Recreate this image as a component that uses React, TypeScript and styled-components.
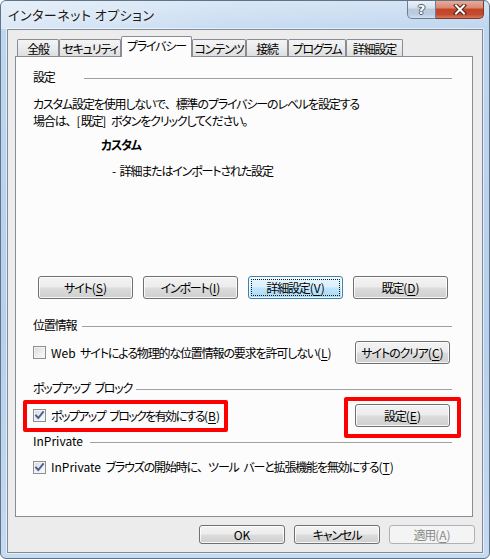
import React from 'react';
import styled, { createGlobalStyle, css } from 'styled-components';

const GlobalStyle = createGlobalStyle`
  html, body { margin: 0; padding: 0; background: #ffffff; }
  body {
    font-family: "Noto Sans CJK JP", "Noto Sans", sans-serif;
    font-size: 12px;
    letter-spacing: -1.15px;
    word-spacing: 3px;
    font-feature-settings: "palt" 1;
    color: #000;
  }
  * { box-sizing: border-box; }
  u { text-underline-offset: 2px; }
`;

const Latin = styled.span`
  letter-spacing: 0;
`;

const FullWidth = styled.span`
  font-feature-settings: normal;
  letter-spacing: -1px;
`;

const Key = ({ k }: { k: string }) => (
  <Latin>
    (<u>{k}</u>)
  </Latin>
);

const Window = styled.div`
  width: 490px;
  height: 559px;
  display: flex;
  flex-direction: column;
  border: 1px solid #5f7389;
  border-radius: 6px;
  overflow: hidden;
  background: linear-gradient(180deg, #d3e3f4 0px, #bfd6ee 28px, #b7d0eb 60%, #c6daf0 100%);
`;

const TitleBar = styled.div`
  height: 28px;
  display: flex;
  align-items: flex-start;
  padding-left: 7px;
  background: linear-gradient(90deg, rgba(255, 255, 255, 0.45) 0%, rgba(255, 255, 255, 0.15) 45%, rgba(255, 255, 255, 0) 100%);
`;

const Title = styled.div`
  flex: 1;
  padding-top: 6px;
  line-height: 16px;
  font-size: 13px;
  letter-spacing: 0.5px;
  word-spacing: 0;
  color: #1a1a1a;
  text-shadow: 0 0 6px rgba(255, 255, 255, 0.9);
`;

const CaptionButtons = styled.div`
  display: flex;
  margin-top: -1px;
  margin-right: 5px;
  height: 19px;
`;

const CaptionButton = styled.div<{ $close?: boolean }>`
  height: 19px;
  width: ${(p) => (p.$close ? 48 : 29)}px;
  display: flex;
  align-items: center;
  justify-content: center;
  border: 1px solid #6b7e95;
  border-top: none;
  ${(p) =>
    p.$close
      ? css`
          border-left: none;
          border-radius: 0 0 5px 0;
          border-color: #7a3a2c;
          background: linear-gradient(180deg, #eab0a2 0%, #d98670 45%, #c44228 50%, #c24b2f 80%, #d8785a 100%);
        `
      : css`
          border-radius: 0 0 0 5px;
          background: linear-gradient(180deg, #eef3f9 0%, #d6e1ee 45%, #b8c9dc 50%, #bccde0 80%, #d2dfee 100%);
        `}
`;

const HelpGlyph = styled.span`
  font-family: "DejaVu Sans", sans-serif;
  font-weight: bold;
  font-size: 13px;
  line-height: 13px;
  letter-spacing: 0;
  color: #ffffff;
  text-shadow: -1px 0 #4d5c6e, 1px 0 #4d5c6e, 0 -1px #4d5c6e, 0 1px #4d5c6e;
`;

const Client = styled.div`
  flex: 1;
  margin: 0 6px 5px 6px;
  border: 1px solid #7f8c9c;
  box-shadow: 0 0 0 1px rgba(255, 255, 255, 0.55);
  background: #ececec;
  display: flex;
  flex-direction: column;
  padding: 6px 7px 8px 7px;
`;

const TabStrip = styled.div`
  height: 21px;
  margin-bottom: -1px;
  padding-left: 2px;
  display: flex;
  align-items: flex-end;
  position: relative;
  z-index: 1;
`;

const Tab = styled.div<{ $w: number; $selected?: boolean }>`
  width: ${(p) => p.$w}px;
  display: flex;
  align-items: center;
  justify-content: center;
  white-space: nowrap;
  border: 1px solid #898c95;
  border-bottom: none;
  border-radius: 2px 2px 0 0;
  ${(p) =>
    p.$selected
      ? css`
          height: 21px;
          background: #fcfcfc;
          padding-bottom: 3px;
        `
      : css`
          height: 17px;
          margin-bottom: 1px;
          background: linear-gradient(180deg, #f4f4f4 0%, #ebebeb 50%, #dedede 100%);
          padding-top: 1px;
        `}
`;

const Panel = styled.div`
  flex: 1;
  margin-right: 2px;
  border: 1px solid #898c95;
  background: #fcfcfc;
  padding: 12px 20px 0 17px;
  display: flex;
  flex-direction: column;
`;

const GroupHeader = styled.div<{ $gap?: number; $mt?: number }>`
  display: flex;
  align-items: center;
  height: 16px;
  line-height: 16px;
  white-space: nowrap;
  margin-top: ${(p) => p.$mt ?? 0}px;
  &::after {
    content: '';
    flex: 1;
    height: 1px;
    background: #a0a0a0;
    margin-left: ${(p) => p.$gap ?? 6}px;
    margin-top: 2px;
  }
`;

const Description = styled.p`
  margin: 10px 0 0 0;
  line-height: 17px;
`;

const LevelName = styled.div`
  margin: 8px 0 0 68px;
  line-height: 16px;
  font-weight: bold;
`;

const LevelDetail = styled.div`
  margin: 10px 0 0 79px;
  line-height: 16px;
`;

const ButtonRow = styled.div`
  display: flex;
  gap: 10px;
  margin-top: 97px;
  padding-left: 5px;
`;

const OptionRow = styled.div<{ $mt: number }>`
  display: flex;
  align-items: center;
  justify-content: space-between;
  margin-top: ${(p) => p.$mt}px;
  padding-right: 2px;
`;

const Button = styled.button<{ $w?: number; $h?: number; $default?: boolean }>`
  position: relative;
  display: block;
  flex: none;
  width: ${(p) => p.$w ?? 95}px;
  height: ${(p) => p.$h ?? 23}px;
  padding: 0;
  margin: 0;
  text-align: center;
  white-space: nowrap;
  font-family: inherit;
  font-size: 12px;
  letter-spacing: inherit;
  word-spacing: inherit;
  font-feature-settings: "palt" 1;
  line-height: ${(p) => (p.$h ?? 23) - 3}px;
  color: #000;
  border: 1px solid #707070;
  border-radius: 3px;
  background: linear-gradient(180deg, #f3f3f3 0%, #ececec 48%, #dcdcdc 52%, #cfcfcf 100%);
  box-shadow: inset 0 0 0 1px rgba(255, 255, 255, 0.8);
  ${(p) =>
    p.$default &&
    css`
      border-color: #3c7fb1;
      background: linear-gradient(180deg, #eaf6fd 0%, #d9f0fc 48%, #bee6fd 52%, #a7d9f5 100%);
      &::after {
        content: '';
        position: absolute;
        inset: 2px;
        border: 1px dotted #1a1a1a;
        border-radius: 1px;
      }
    `}
  &:disabled {
    color: #8a8a8a;
    border-color: #adb2b5;
    background: #f4f4f4;
    box-shadow: none;
  }
`;

const CheckLabel = styled.label`
  position: relative;
  display: flex;
  align-items: center;
  gap: 5px;
  height: 16px;
  line-height: 16px;
  white-space: nowrap;
`;

const CheckText = styled.span<{ $tight?: boolean }>`
  display: block;
  letter-spacing: ${(p) => (p.$tight ? '-1.6px' : 'inherit')};
`;

const CheckBox = styled.span`
  width: 13px;
  height: 13px;
  flex: none;
  display: flex;
  align-items: center;
  justify-content: center;
  border: 1px solid #8e8f8f;
  background: linear-gradient(135deg, #d8d8d8 0%, #eeeeee 55%, #fafafa 100%);
  box-shadow: inset 0 0 0 1px #f4f4f4;
`;

const Highlight = styled.span`
  position: absolute;
  border: 4px solid #ff0000;
  border-radius: 2px;
  pointer-events: none;
  z-index: 2;
`;

const LabelHighlight = styled(Highlight)`
  top: -8px;
  left: -10px;
  width: 205px;
  height: 32px;
`;

const ButtonHighlight = styled(Highlight)`
  top: -7px;
  bottom: -11px;
  left: -11px;
  right: -11px;
`;

const ButtonWrap = styled.div`
  position: relative;
`;

const Footer = styled.div`
  display: flex;
  justify-content: flex-end;
  gap: 9px;
  margin-top: 8px;
`;

const Check = ({ checked }: { checked?: boolean }) => (
  <CheckBox>
    {checked && (
      <svg width="11" height="11" viewBox="0 0 11 11">
        <path d="M2 5.5 L4.3 8 L9 2.2" fill="none" stroke="#4a5f97" strokeWidth="1.9" strokeLinecap="square" />
      </svg>
    )}
  </CheckBox>
);

const tabs: { label: string; w: number; selected?: boolean }[] = [
  { label: '全般', w: 42 },
  { label: 'セキュリティ', w: 62 },
  { label: 'プライバシー', w: 71, selected: true },
  { label: 'コンテンツ', w: 54 },
  { label: '接続', w: 42 },
  { label: 'プログラム', w: 58 },
  { label: '詳細設定', w: 57 },
];

export default function App() {
  return (
    <>
      <GlobalStyle />
      <Window>
        <TitleBar>
          <Title>インターネット オプション</Title>
          <CaptionButtons>
            <CaptionButton>
              <HelpGlyph>?</HelpGlyph>
            </CaptionButton>
            <CaptionButton $close>
              <svg width="14" height="11" viewBox="0 0 14 11">
                <path d="M3 1.5 L11 9.5 M11 1.5 L3 9.5" stroke="#4a2218" strokeWidth="4" strokeLinecap="square" />
                <path d="M3 1.5 L11 9.5 M11 1.5 L3 9.5" stroke="#ffffff" strokeWidth="2" strokeLinecap="square" />
              </svg>
            </CaptionButton>
          </CaptionButtons>
        </TitleBar>
        <Client>
          <TabStrip>
            {tabs.map((t) => (
              <Tab key={t.label} $w={t.w} $selected={t.selected}>
                {t.label}
              </Tab>
            ))}
          </TabStrip>
          <Panel>
            <GroupHeader $gap={29}>設定</GroupHeader>
            <Description>
              カスタム設定を使用しないで<FullWidth>、</FullWidth>標準のプライバシーのレベルを設定する
              <br />
              場合は<FullWidth>、</FullWidth>
              <Latin>[</Latin>既定<Latin>]</Latin> ボタンをクリックしてください。
            </Description>
            <LevelName>カスタム</LevelName>
            <LevelDetail>- 詳細またはインポートされた設定</LevelDetail>
            <ButtonRow>
              <Button>
                サイト<Key k="S" />
              </Button>
              <Button>
                インポート<Key k="I" />
              </Button>
              <Button $default>
                詳細設定<Key k="V" />
              </Button>
              <Button>
                既定<Key k="D" />
              </Button>
            </ButtonRow>

            <GroupHeader $mt={18}>位置情報</GroupHeader>
            <OptionRow $mt={8}>
              <CheckLabel>
                <Check />
                <CheckText>
                  <Latin>Web</Latin> サイトによる物理的な位置情報の要求を許可しない<Key k="L" />
                </CheckText>
              </CheckLabel>
              <Button>
                サイトのクリア<Key k="C" />
              </Button>
            </OptionRow>

            <GroupHeader $mt={16} $gap={4}>ポップアップ ブロック</GroupHeader>
            <OptionRow $mt={8}>
              <CheckLabel>
                <LabelHighlight />
                <Check checked />
                <CheckText $tight>
                  ポップアップ ブロックを有効にする<Key k="B" />
                </CheckText>
              </CheckLabel>
              <ButtonWrap>
                <ButtonHighlight />
                <Button>
                  設定<Key k="E" />
                </Button>
              </ButtonWrap>
            </OptionRow>

            <GroupHeader $mt={6} $gap={7}>
              <Latin>InPrivate</Latin>
            </GroupHeader>
            <OptionRow $mt={10}>
              <CheckLabel>
                <Check checked />
                <CheckText>
                  <Latin>InPrivate</Latin> ブラウズの開始時に<FullWidth>、</FullWidth>ツール バーと拡張機能を無効にする
                  <Key k="T" />
                </CheckText>
              </CheckLabel>
            </OptionRow>
          </Panel>
          <Footer>
            <Button $w={86} $h={19}>
              <Latin>OK</Latin>
            </Button>
            <Button $w={86} $h={19}>
              キャンセル
            </Button>
            <Button $w={86} $h={19} disabled>
              適用<Key k="A" />
            </Button>
          </Footer>
        </Client>
      </Window>
    </>
  );
}
